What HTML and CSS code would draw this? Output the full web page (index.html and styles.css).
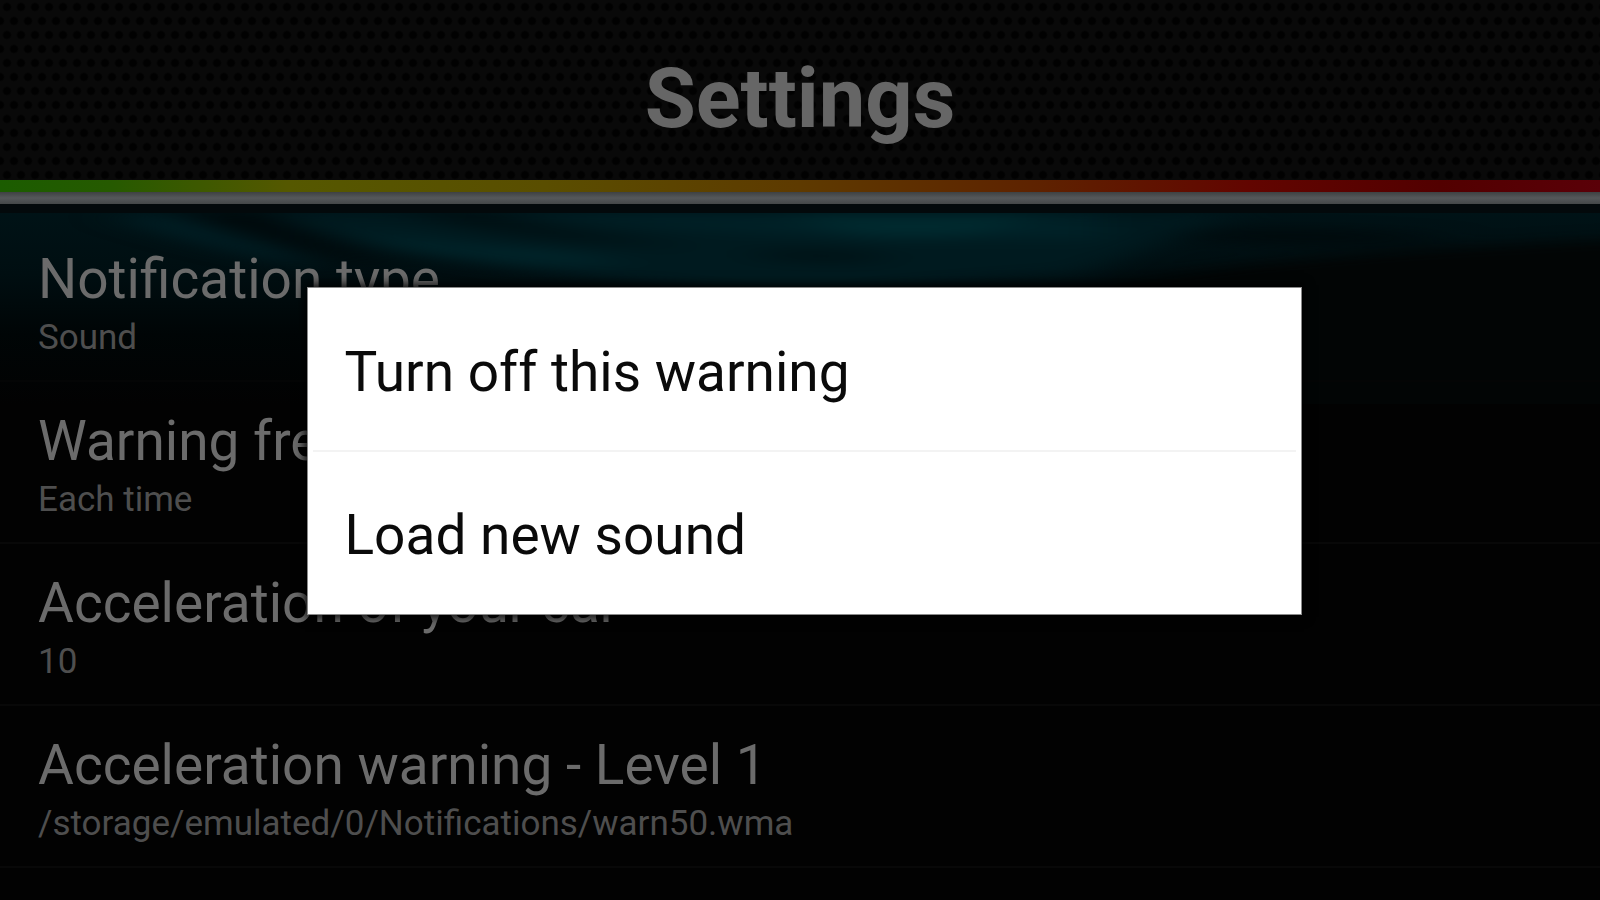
FILE: index.html
```
<!DOCTYPE html>
<html lang="en">
<head>
  <meta charset="UTF-8">
  <meta name="viewport" content="width=device-width, initial-scale=1.0">
  <title>Settings</title>
  <link rel="stylesheet" href="styles.css">
</head>
<body>
  <header class="header">
    <h1>Settings</h1>
  </header>
  <div class="level-bar"></div>
  <div class="divider-bar"></div>

  <main class="content">
    <svg class="waves" viewBox="0 0 1600 200" preserveAspectRatio="none" aria-hidden="true">
      <defs>
        <linearGradient id="glow" x1="0" y1="0" x2="0" y2="1">
          <stop offset="0" stop-color="#001317" />
          <stop offset="0.35" stop-color="#000e11" />
          <stop offset="0.65" stop-color="#000506" />
          <stop offset="1" stop-color="#020202" />
        </linearGradient>
        <filter id="soft" x="-10%" y="-50%" width="120%" height="200%" color-interpolation-filters="sRGB">
          <feGaussianBlur stdDeviation="22 7" />
        </filter>
      </defs>
      <rect width="1600" height="200" fill="url(#glow)" />
      <g filter="url(#soft)">
        <path d="M250 8 Q420 60 620 76 L800 96 Q900 80 1080 70 L1240 10Z" fill="#001a1f" />
        <path d="M290 12 Q380 40 560 50 L640 62 Q520 60 400 44Z" fill="#002a30" />
        <path d="M500 8 Q700 30 900 34 L1100 36 V8Z" fill="#002127" />
        <path d="M780 10 H1040 Q980 40 860 32Z" fill="#002a2f" />
        <path d="M110 12 Q200 44 330 66 Q230 20 160 10Z" fill="#001f25" />
        <path d="M170 6 Q260 46 400 64 Q320 36 260 6Z" fill="#00090b" />
        <path d="M400 8 Q520 40 700 42 Q580 30 480 8Z" fill="#000f12" />
        <path d="M740 50 Q820 42 900 54 Q820 62 740 50Z" fill="#000f12" />
        <path d="M1040 100 Q1150 52 1700 32 V260 H1000Z" fill="#020505" />
        <path d="M1160 30 Q1300 20 1460 34 Q1300 48 1160 30Z" fill="#00090b" />
      </g>
      <rect width="1600" height="9" fill="#03090b" />
    </svg>

    <ul class="settings">
      <li>
        <h2>Notification type</h2>
        <p>Sound</p>
      </li>
      <li>
        <h2>Warning frequency</h2>
        <p>Each time</p>
      </li>
      <li>
        <h2>Acceleration of your car</h2>
        <p>10</p>
      </li>
      <li>
        <h2>Acceleration warning - Level 1</h2>
        <p>/storage/emulated/0/Notifications/warn50.wma</p>
      </li>
    </ul>
  </main>

  <div class="overlay">
    <div class="menu" role="dialog" aria-label="Warning options">
      <button type="button">Turn off this warning</button>
      <hr>
      <button type="button">Load new sound</button>
    </div>
  </div>
</body>
</html>
```
FILE: styles.css
```
* {
  box-sizing: border-box;
}
body {
  margin: 0;
  min-height: 100vh;
  overflow: hidden;
  font-family: Roboto, sans-serif;
  background-color: #020202;
  color: #6b6b6b;
}
.header {
  height: 180px;
  padding-top: 18px;
  display: flex;
  justify-content: center;
  align-items: center;
  background-color: #090909;
  background-image:
    radial-gradient(circle, #010101 3px, transparent 5px),
    radial-gradient(circle, #010101 3px, transparent 5px);
  background-size: 14px 28px;
  background-position: 0 -7px, 7px 7px;
}
h1 {
  margin: 0;
  font-size: 83px;
  line-height: 100px;
  font-weight: bold;
  color: #666;
}
.level-bar {
  height: 12px;
  background: linear-gradient(to right, #1b5c00, #265a00 7%, #555800 18%, #5a4e00 34%, #5e3a00 50%, #5e2200 65%, #620500 78%, #520000 90%, #5a0008);
}
.divider-bar {
  height: 12px;
  background: linear-gradient(#3e4142, #55585a 50%, #444748);
}
.content {
  position: relative;
  padding-top: 16px;
}
.waves {
  position: absolute;
  top: 0;
  left: 0;
  width: 100%;
  height: 200px;
}
.settings {
  position: relative;
  margin: 0;
  padding: 0;
  list-style: none;
}
.settings li {
  padding: 25px 38px 17px;
  border-bottom: 2px solid #080808;
}
h2 {
  margin: 0;
  font-size: 55px;
  line-height: 68px;
  font-weight: normal;
}
p {
  margin: 0;
  font-size: 35px;
  line-height: 50px;
  color: #4e4e4e;
}
.settings li:first-child {
  border-bottom-color: #040505;
}
.overlay {
  position: fixed;
  inset: 0;
  padding: 2px 0 0 8px;
  display: flex;
  justify-content: center;
  align-items: center;
}
.menu {
  width: 62.5%;
  padding: 1px;
  background-color: #fff;
  border: 1px solid #8a8a8a;
  box-shadow: 0 0 10px 2px #000;
}
.menu button {
  display: block;
  width: 100%;
  padding: 48px 36px 43px;
  border: none;
  background: none;
  font-family: inherit;
  font-size: 55px;
  line-height: 70px;
  text-align: left;
  color: #0a0a0a;
  cursor: pointer;
}
.menu hr {
  height: 2px;
  margin: 0 4px;
  border: none;
  background-color: #f3f3f3;
}
```
